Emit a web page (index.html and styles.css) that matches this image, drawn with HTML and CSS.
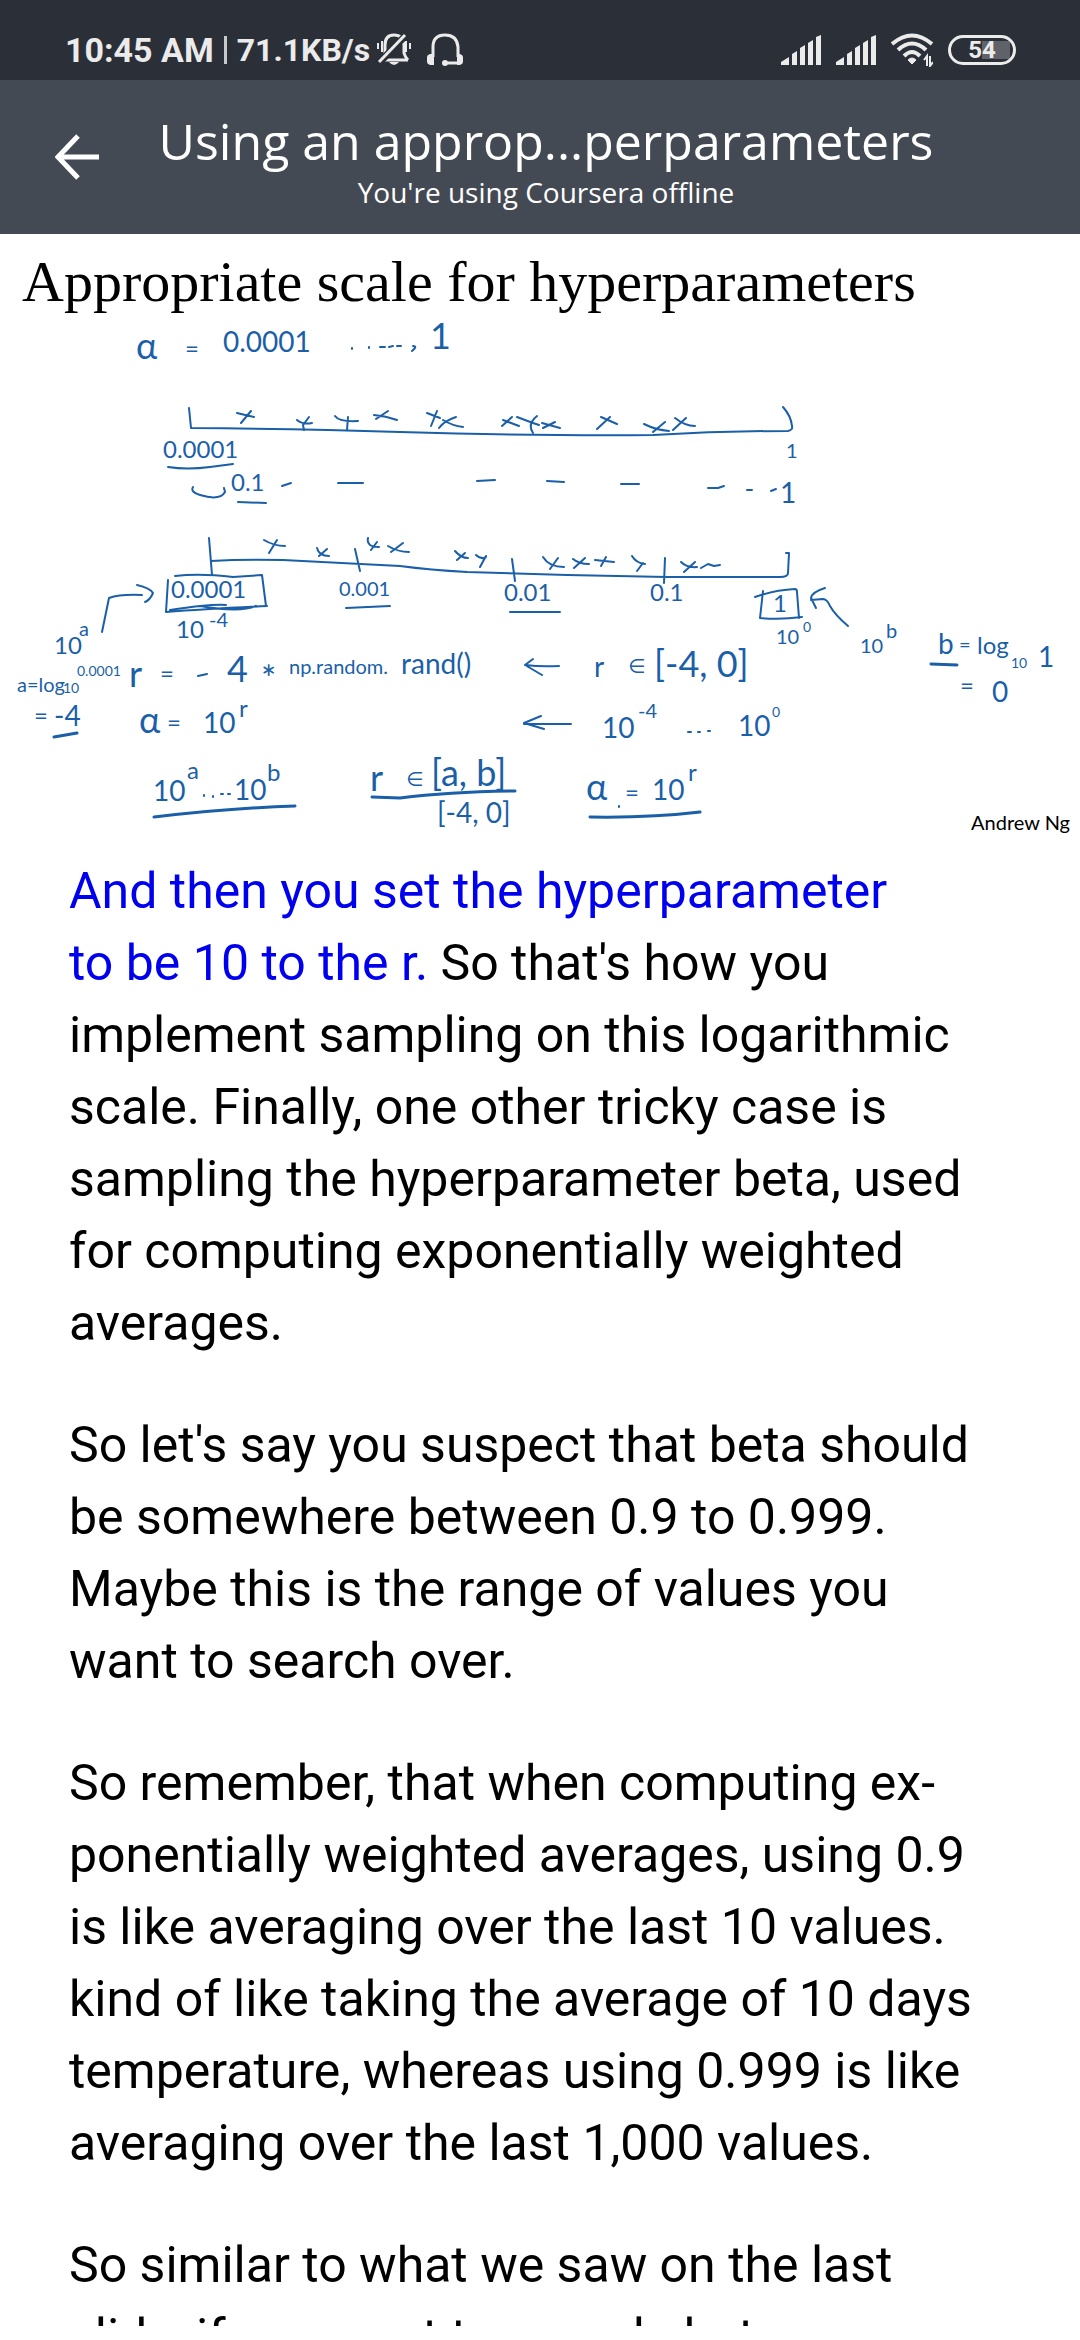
FILE: index.html
```html
<!DOCTYPE html>
<html lang="en">
<head>
<meta charset="utf-8">
<meta name="viewport" content="width=device-width, initial-scale=1">
<title>Using an appropriate scale to pick hyperparameters</title>
<link rel="stylesheet" href="styles.css">
</head>
<body>
<div class="screen">
  <div class="status">
    <div class="status-left">
      <span class="clock">10:45 AM</span>
      <span class="divider"></span>
      <span class="speed">71.1KB/s</span>
      <svg class="bell" width="34" height="34" viewBox="0 0 34 34" fill="none" stroke="currentColor" stroke-width="3">
        <path d="M8 27h23M8 22V12Q8 2 17 2t10 10v8q1 4 4 7"/>
        <path d="M2 30L29 2" stroke-width="7" stroke="#2b2f37"/>
        <path d="M2 29L28 2" stroke-width="3"/>
        <path d="M1 10v6M5 8v11M33 10v6M29 8v11" stroke-width="2"/>
        <path d="M12 29h10q-5 6-10 0z" fill="currentColor" stroke="none"/>
      </svg>
      <svg class="headset" width="36" height="34" viewBox="0 0 36 34" fill="none" stroke="currentColor" stroke-width="3">
        <path d="M6 24V14Q6 2 18 2T31 14v10M31 30H18"/>
        <path d="M3 21h4v11H3q-3-1-3-3v-5q0-2 3-3zM30 21h3q3 1 3 3v5q0 2-3 3h-3z" fill="currentColor" stroke="none"/>
        <circle cx="18" cy="30" r="3" fill="currentColor" stroke="none"/>
      </svg>
    </div>
    <div class="status-right">
      <svg width="40" height="30" viewBox="0 0 40 30" fill="currentColor"><path d="M0 30v-3l8-5v8zM11 30V19l5-3v14zM19 30V13l5-3v20zM27 30V8l5-3v25zM35 30V2l5-2v30z"/></svg>
      <svg width="40" height="30" viewBox="0 0 40 30" fill="currentColor"><path d="M0 30v-3l8-5v8zM11 30V19l5-3v14zM19 30V13l5-3v20zM27 30V8l5-3v25zM35 30V2l5-2v30z"/></svg>
      <svg width="42" height="34" viewBox="0 0 42 34" fill="none" stroke="currentColor" stroke-width="4">
        <path d="M1 11Q21-6 41 11M7 17Q21 4 35 17M13 23Q21 15 29 23"/>
        <path d="M17 27q4-4 8 0l-4 4z" fill="currentColor" stroke-width="1"/>
        <path d="M36 33v-10l-3 4M39 23v10l3-4" stroke-width="2"/>
      </svg>
      <span class="battery">54</span>
    </div>
  </div>

  <header class="appbar">
    <button class="back" type="button" aria-label="Back">
      <svg width="44" height="46" viewBox="0 0 44 46" fill="none" stroke="currentColor" stroke-width="5"><path d="M44 23H4M23 2L3 23l20 21"/></svg>
    </button>
    <div class="titles">
      <h1>Using an approp...perparameters</h1>
      <p>You're using Coursera offline</p>
    </div>
  </header>

  <main>
    <figure class="slide">
      <h2>Appropriate scale for hyperparameters</h2>
      <svg class="board" viewBox="0 310 1080 532">
        <g class="ink">
          <!-- ellipsis after the first value -->
          <path d="M352 348v1M369 347v1M380 347h5M389 347l4-1M397 346h4M413 346q5 0-1 5"/>
          <!-- linear axis with uniform samples -->
          <path d="M189 408l2 20Q300 429 400 432Q540 436 653 435Q720 431 788 431Q793 430 792 426Q791 416 783 407"/>
          <path d="M237 413q8 2 17 4M251 411l-10 12M297 420q6 5 15 3M309 417l-6 8 1 5M335 416q4 6 23 5M348 417l-1 13M374 415q12 1 23 5M388 411l-12 8"/>
          <path d="M427 413l13 5M437 411l-6 15M443 420q10 6 20 7M456 417q-12 4-17 11M503 420l16 6M512 417l-10 9M517 417l16 6 6 2M537 416q-10 8-4 17M542 423l18 5M555 422l-12 6M601 417l16 7M610 417l-13 12M644 424q12 6 25 7M665 422l-12 10M675 418q10 8 20 8M686 418l-13 12"/>
          <path d="M168 467Q187 470 210 467L233 464M193 487Q190 492 200 495Q220 501 225 492L224 488M238 502L266 503"/>
          <path d="M282 486l9-3M338 483l25 0M477 481l18-1M547 481l17 1M621 484h18M708 488h10l6-2M747 490l5 0M771 491l5-2"/>
          <!-- logarithmic axis with its decade ticks -->
          <path d="M209 538l3 37M211 561Q243 559 283 560L400 566Q430 570 467 572L567 575L667 577L780 577Q788 577 788 573L789 553L786 553M355 549l5 22M512 559l3 22M665 558l-1 25"/>
          <path d="M264 540q10 6 21 6M277 540l-8 13M317 548q2 8 12 8M327 549l-8 7M368 538q-2 9 11 9M377 542l-6 8M388 546q10 6 21 6M403 543l-12 9M455 551q6 7 13 7M465 553l-8 7M476 555q5 5 10 2M486 556l-6 11M543 557q6 10 21 10M558 558l-8 11M573 559q6 5 16 5M585 558l-11 10M595 560l19 2M606 557l-5 9M632 556q4 7 13 8M643 563l-6 8M681 562q6 6 16 5M695 562l-11 10M701 568l7-4 6 2 6-1"/>
          <!-- boxed left end -->
          <path d="M175 576Q200 573 233 577L262 575L266 606M168 580L166 612Q205 609 267 606M170 610Q210 604 226 605M200 606Q240 613 256 606"/>
          <path d="M102 632L109 598Q120 594 142 595M137 585Q150 588 153 593Q150 600 145 602"/>
          <path d="M346 608l44-2M510 612h50"/>
          <!-- boxed right end -->
          <path d="M755 597Q775 590 795 589Q797 589 797 592L799 618M802 617Q780 620 760 618L763 591"/>
          <path d="M848 626Q835 615 830 606Q827 599 823 599L811 600M825 588Q812 592 811 598L816 608"/>
          <path d="M198 676l9-2M525 665q16 2 34 1M533 659l-8 6 17 10M524 724h47M541 716l-17 7 20 6"/>
          <path d="M688 732h3M698 732h2M708 731h2M204 795v1M213 796v1M221 794h2M228 794h2M619 806v1"/>
          <path class="bold" d="M54 737L77 733M931 664L957 665M154 817Q230 808 295 806M372 797L400 798Q450 792 515 791M590 817Q650 818 700 812"/>
        </g>
        <g class="note">
          <text class="xl" x="136" y="359">α</text><text class="m" x="185" y="357">=</text><text class="l" x="223" y="352">0.0001</text><text class="xl" x="430" y="349">1</text>
          <text class="m" x="163" y="458">0.0001</text><text class="s" x="786" y="458">1</text>
          <text class="m" x="231" y="491">0.1</text><text class="l" x="780" y="503">1</text>
          <text class="m" x="171" y="598">0.0001</text><text class="s" x="339" y="596">0.001</text><text class="m" x="504" y="601">0.01</text><text class="m" x="650" y="601">0.1</text><text class="m" x="773" y="612">1</text>
          <text class="m" x="176" y="638">10</text><text class="s" x="209" y="627">-4</text>
          <text class="m" x="54" y="654">10</text><text class="s" x="79" y="636">a</text>
          <text class="s" x="17" y="692">a=log</text><text class="xs" x="63" y="693">10</text><text class="xs" x="77" y="676">0.0001</text>
          <text class="m" x="34" y="724">=</text><text class="l" x="54" y="726">-4</text>
          <text class="xl" x="129" y="687">r</text><text class="m" x="160" y="682">=</text><text class="xl" x="227" y="682">4</text><text class="xl" x="261" y="692">*</text><text class="s" x="289" y="674">np.random.</text><text class="l" x="401" y="674">rand()</text>
          <text class="l" x="594" y="677">r</text><text class="s" x="628" y="673">∈</text><text class="xl" x="654" y="677">[-4, 0]</text>
          <text class="xl" x="139" y="733">α</text><text class="m" x="167" y="731">=</text><text class="l" x="203" y="733">10</text><text class="m" x="239" y="717">r</text>
          <text class="l" x="602" y="738">10</text><text class="s" x="638" y="718">-4</text><text class="l" x="738" y="736">10</text><text class="xs" x="772" y="717">0</text>
          <text class="l" x="153" y="801">10</text><text class="m" x="187" y="779">a</text><text class="l" x="234" y="800">10</text><text class="m" x="267" y="781">b</text>
          <text class="xl" x="370" y="791">r</text><text class="s" x="406" y="786">∈</text><text class="xl" x="431" y="786">[a, b]</text>
          <text class="l" x="437" y="823">[-4, 0]</text>
          <text class="xl" x="586" y="800">α</text><text class="m" x="625" y="801">=</text><text class="l" x="652" y="800">10</text><text class="m" x="688" y="781">r</text>
          <text class="s" x="776" y="644">10</text><text class="xs" x="803" y="632">0</text>
          <text class="s" x="860" y="653">10</text><text class="s" x="886" y="638">b</text>
          <text class="l" x="938" y="654">b</text><text class="s" x="959" y="652">=</text><text class="m" x="977" y="654">log</text><text class="xs" x="1011" y="668">10</text><text class="l" x="1038" y="667">1</text>
          <text class="m" x="960" y="694">=</text><text class="l" x="992" y="702">0</text>
        </g>
      </svg>
      <figcaption>Andrew Ng</figcaption>
    </figure>

    <article class="transcript">
      <p><span class="current">And then you set the hyperparameter<br>to be 10 to the r.</span> So that's how you implement sampling on this logarithmic scale. Finally, one other tricky case is sampling the hyperparameter beta, used for computing exponentially weighted averages.</p>
      <p>So let's say you suspect that beta should be somewhere between 0.9 to 0.999. Maybe this is the range of values you want to search over.</p>
      <p>So remember, that when computing ex&shy;ponentially weighted averages, using 0.9 is like averaging over the last 10 values. kind of like taking the average of 10 days temperature, whereas using 0.999 is like averaging over the last 1,000 values.</p>
      <p>So similar to what we saw on the last slide, if you want to sample between</p>
    </article>
  </main>
</div>
</body>
</html>
```
FILE: styles.css
```css
* { box-sizing: border-box; }
body { margin: 0; background: #fff; color: #000; font-family: Roboto, "Noto Sans", sans-serif; }
h1, h2, p, figure { margin: 0; font-weight: 400; }
svg { display: block; }

.screen { height: 100vh; display: flex; flex-direction: column; overflow: hidden; padding-bottom: 14px; }

.status {
  flex: none; height: 80px; padding: 20px 64px 0 65px;
  display: flex; justify-content: space-between; align-items: center;
  background: #2b2f37; color: #ebebeb; font-weight: 700;
}
.status-left, .status-right { display: flex; align-items: center; }
.clock { font-size: 34px; }
.divider { width: 3px; height: 28px; margin: 0 10px; background: #c8c9cb; }
.speed { font-size: 32px; }
.bell { margin-left: 7px; }
.headset { margin-left: 16px; }
.status-right { gap: 15px; }
.battery {
  width: 68px; height: 30px; border: 3px solid #ebebeb; border-radius: 15px;
  font-size: 24px; line-height: 25px; text-align: center;
  background: linear-gradient(90deg, transparent 50%, #5f6268 50%) 3px 3px / 56px 18px no-repeat;
}

.appbar {
  flex: none; height: 154px; display: grid; grid-template-columns: 154px 1fr 142px;
  background: #444a53; color: #fff; font-family: "Open Sans", "Noto Sans", sans-serif;
}
.back { padding: 0 0 0 55px; border: 0; background: none; color: inherit; text-align: left; }
.titles { display: flex; flex-direction: column; justify-content: center; padding-top: 6px; text-align: center; white-space: nowrap; }
h1 { font-size: 50px; line-height: 64px; }
.titles p { font-size: 28px; line-height: 38px; }

main { flex: 1; min-height: 0; overflow: hidden; }

.slide { display: grid; }
h2 { height: 76px; padding-left: 22px; font-family: "Liberation Serif", serif; font-size: 58px; line-height: 96px; white-space: nowrap; }
.board { grid-area: 2 / 1; width: 100%; height: auto; }
figcaption { grid-area: 2 / 1; align-self: end; justify-self: end; padding: 0 10px 6px 0; font-family: Lato, sans-serif; font-size: 20px; line-height: 28px; }
.ink { fill: none; stroke: #1a5fa8; stroke-width: 2; stroke-linecap: round; stroke-linejoin: round; }
.ink .bold { stroke-width: 3; }
.note { fill: #1a5fa8; font-family: Lato, "DejaVu Sans", sans-serif; }
.xs { font-size: 14px; }
.s { font-size: 20px; }
.m { font-size: 24px; }
.l { font-size: 28px; }
.xl { font-size: 36px; }

.transcript { padding: 13px 90px 0 69px; font-size: 50px; line-height: 72px; }
.transcript p + p { margin-top: 50px; }
.current { color: #0000ee; }
```
